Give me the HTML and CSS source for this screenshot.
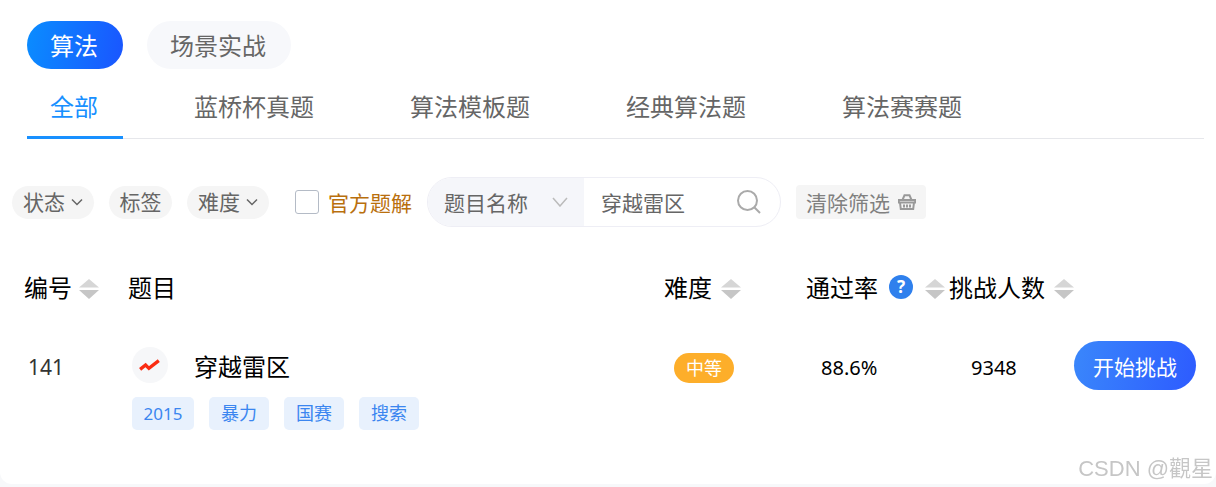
FILE: index.html
```html
<!DOCTYPE html>
<html lang="zh-CN">
<head>
<meta charset="utf-8">
<title>题库</title>
<link rel="stylesheet" href="styles.css">
</head>
<body>
<main class="card">
  <div class="modes">
    <span class="mode mode-on">算法</span>
    <span class="mode">场景实战</span>
  </div>
  <nav class="tabs">
    <span class="tab tab-on">全部</span>
    <span class="tab">蓝桥杯真题</span>
    <span class="tab">算法模板题</span>
    <span class="tab">经典算法题</span>
    <span class="tab">算法赛赛题</span>
  </nav>
  <div class="filters">
    <span class="chip">状态<svg class="chev" viewBox="0 0 12 8"><path d="M1 1.500 6 6.500l5-5"/></svg></span>
    <span class="chip chip-plain">标签</span>
    <span class="chip">难度<svg class="chev" viewBox="0 0 12 8"><path d="M1 1.500 6 6.500l5-5"/></svg></span>
    <label class="official"><span class="box"></span><span>官方题解</span></label>
    <div class="search">
      <div class="search-type">题目名称<svg class="chev-big" viewBox="0 0 16 10"><path d="M1 1l7 8 7-8"/></svg></div>
      <div class="search-input">穿越雷区<svg class="lens" viewBox="0 0 24 24"><circle cx="10.500" cy="10.500" r="9.500"/><path d="M17.500 17.500 23 23"/></svg></div>
    </div>
    <button class="clear">清除筛选<svg class="basket" viewBox="0 0 18 16"><path class="basket-line" d="M4.500 6 6.500 1.200h5L13.500 6"/><path class="basket-line" d="M.8 6h16.400v2.500H.8zM2 8.500l.8 6.500h12.400l.8-6.500"/><path class="basket-line" d="M6 10.500v3M9 10.500v3M12 10.500v3"/></svg></button>
  </div>
  <div class="grid head">
    <div class="cell">编号<svg class="sort sort-tight" viewBox="0 0 20 20"><path class="sort-up" d="M10 0l10 8.500H0z"/><path class="sort-down" d="M0 11h20L10 20z"/></svg></div>
    <div class="cell">题目</div>
    <div class="cell">难度<svg class="sort" viewBox="0 0 20 20"><path class="sort-up" d="M10 0l10 8.500H0z"/><path class="sort-down" d="M0 11h20L10 20z"/></svg></div>
    <div class="cell">通过率<span class="help">?</span><svg class="sort" viewBox="0 0 20 20"><path class="sort-up" d="M10 0l10 8.500H0z"/><path class="sort-down" d="M0 11h20L10 20z"/></svg></div>
    <div class="cell">挑战人数<svg class="sort" viewBox="0 0 20 20"><path class="sort-up" d="M10 0l10 8.500H0z"/><path class="sort-down" d="M0 11h20L10 20z"/></svg></div>
  </div>
  <div class="grid row">
    <div class="num">141</div>
    <div class="title">
      <div class="name">
        <span class="trend"><svg viewBox="0 0 20 12"><path d="M1 10l5-4 3 3 9-7"/></svg></span>
        <span>穿越雷区</span>
      </div>
      <div class="tags">
        <span class="tag tag-num">2015</span>
        <span class="tag">暴力</span>
        <span class="tag">国赛</span>
        <span class="tag">搜索</span>
      </div>
    </div>
    <div class="level"><span class="pill">中等</span></div>
    <div class="stat stat-rate">88.6%</div>
    <div class="stat stat-count">9348</div>
    <button class="start">开始挑战</button>
  </div>
  <div class="mark">CSDN @觀星</div>
</main>
</body>
</html>
```
FILE: styles.css
```css
* { box-sizing: border-box; }
html, body { margin: 0; height: 487px; overflow: hidden; background: #f7f8fa; }
body { font-family: "Noto Sans", "Noto Sans CJK SC", sans-serif; color: #000; }
.card {
  position: relative;
  height: 484px;
  background: #fff;
  border-radius: 0 0 12px 12px;
  padding-top: 21px;
}
.modes { display: flex; gap: 24px; padding-left: 27px; }
.mode {
  height: 48px;
  padding: 0 25px 0 23px;
  border-radius: 24px;
  background: #f7f8fb;
  color: #666;
  font-size: 24px;
  line-height: 49px;
}
.mode-on { background: linear-gradient(100deg, #0a8dff, #1a55ff); color: #fff; }
.tabs {
  display: flex;
  gap: 48px;
  margin: 0 12px 0 27px;
  height: 70px;
  border-bottom: 1px solid #e6e7eb;
}
.tab {
  height: 70px;
  padding: 0 25px 0 23px;
  color: #666;
  font-size: 24px;
  line-height: 75px;
}
.tab-on { color: #1890ff; border-bottom: 3px solid #1890ff; }
.filters {
  display: flex;
  align-items: center;
  height: 50px;
  margin-top: 38px;
  padding-left: 12px;
}
.chip {
  display: flex;
  align-items: center;
  gap: 6px;
  height: 33px;
  padding: 0 11px 2px;
  margin-right: 15px;
  border-radius: 17px;
  background: #f5f5f5;
  color: #666;
  font-size: 21px;
}
.chip-plain { padding: 0 10.500px 2px; }
.chev { width: 12px; height: 8px; margin-top: 2px; fill: none; stroke: #666; stroke-width: 1.500; }
.official { display: flex; align-items: center; margin-left: 11px; color: #b96f0d; font-size: 21px; }
.box {
  width: 24px;
  height: 24px;
  margin-right: 9px;
  border: 1px solid #b4bbc6;
  border-radius: 3px;
  background: #fff;
}
.search {
  display: flex;
  width: 354px;
  height: 50px;
  margin-left: 15px;
  border: 1px solid #eeeef5;
  border-radius: 25px;
  overflow: hidden;
  font-size: 21px;
  color: #666;
}
.search-type {
  display: flex;
  align-items: center;
  width: 156px;
  padding-left: 16px;
  background: #f5f6fa;
}
.chev-big { width: 16px; height: 10px; margin-left: 24px; fill: none; stroke: #bbb; stroke-width: 1.500; }
.search-input { display: flex; align-items: center; padding-left: 17px; }
.lens { width: 24px; height: 24px; margin-left: 52px; fill: none; stroke: #aaa; stroke-width: 2; }
.clear {
  display: flex;
  align-items: center;
  width: 130px;
  height: 34px;
  margin-left: 15px;
  padding: 0 0 0 10px;
  border: 0;
  border-radius: 4px;
  background: #f5f5f5;
  color: #808080;
  font: inherit;
  font-size: 21px;
}
.basket { width: 18px; height: 16px; margin-left: 8px; fill: none; }
.basket-line { stroke: #999; stroke-width: 2; }
.grid {
  display: grid;
  grid-template-columns: 104px 536px 142px 143px 125px 122px;
  padding-left: 24px;
}
.head { margin-top: 36px; height: 48px; align-items: center; }
.cell { display: flex; align-items: center; padding-bottom: 2px; font-size: 24px; white-space: nowrap; }
.sort { width: 20px; height: 20px; margin: 6px 0 0 9px; filter: blur(0.4px); }
.sort-tight { margin-left: 7px; }
.sort-up { fill: #d6d6d6; }
.sort-down { fill: #c6c6c6; }
.help {
  width: 24px;
  height: 24px;
  margin: 2px 3px 0 11px;
  border-radius: 50%;
  background: #2f80ed;
  color: #fff;
  font-size: 17px;
  font-weight: 700;
  line-height: 24px;
  text-align: center;
}
.row { margin-top: 36px; align-items: start; }
.num { padding: 2px 0 0 4px; color: #333; font-size: 21px; line-height: 36px; }
.title { padding-left: 4px; }
.name { display: flex; align-items: center; gap: 26px; height: 36px; font-size: 24px; }
.trend {
  display: flex;
  align-items: center;
  justify-content: center;
  width: 36px;
  height: 36px;
  border-radius: 50%;
  background: #f6f7f9;
}
.trend svg { width: 22px; height: 14px; fill: none; stroke: #fa2c12; stroke-width: 3; }
.tags { display: flex; gap: 15px; margin-top: 14px; }
.tag {
  height: 33px;
  padding: 0 12px;
  border-radius: 5px;
  background: #e8f1fd;
  color: #3b86f0;
  font-size: 18px;
  line-height: 33px;
}
.tag-num { padding: 0 11.500px; font-size: 17px; }
.level { padding: 3px 0 0 10px; height: 39px; display: flex; align-items: center; }
.pill {
  width: 60px;
  height: 30px;
  border-radius: 15px;
  background: #fdae2a;
  color: #fff;
  font-size: 18px;
  line-height: 30px;
  text-align: center;
}
.stat { padding-top: 3px; font-size: 20px; line-height: 36px; }
.stat-rate { padding-left: 15px; }
.stat-count { padding-left: 22px; }
.start {
  width: 122px;
  height: 49px;
  margin-top: -6px;
  border: 0;
  border-radius: 24.500px;
  background: linear-gradient(100deg, #3a87fb, #2d5bff);
  color: #fff;
  font: inherit;
  font-size: 21px;
  padding: 0;
}
.mark {
  position: absolute;
  right: 3px;
  bottom: 0;
  color: #c6c6c6;
  font-family: "Liberation Sans", "Noto Sans CJK SC", sans-serif;
  font-size: 22px;
  line-height: 30px;
  filter: blur(0.4px);
}
```
